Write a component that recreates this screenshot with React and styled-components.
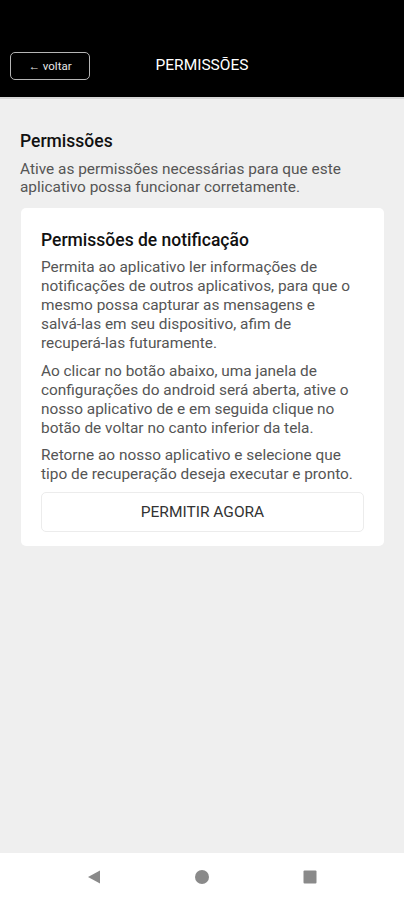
import styled, { createGlobalStyle } from "styled-components"

const Global = createGlobalStyle`
  html, body {
    margin: 0;
    padding: 0;
  }
  body {
    font-family: Roboto, "Noto Sans", sans-serif;
    background: #efefef;
  }
`

const Screen = styled.div`
  width: 404px;
  height: 900px;
  display: flex;
  flex-direction: column;
  background: #efefef;
`

const Header = styled.header`
  height: 99px;
  background: #000;
  border-bottom: 2px solid #d6d6d6;
  display: flex;
  align-items: flex-end;
  padding: 0 10px 17px;
  box-sizing: border-box;
  position: relative;
`

const BackButton = styled.button`
  width: 80px;
  height: 28px;
  background: transparent;
  border: 1.5px solid #b5b5b5;
  border-radius: 5px;
  color: #e8e8e8;
  font-family: Roboto, sans-serif;
  font-size: 11.5px;
  padding: 0;
`

const Title = styled.h1`
  position: absolute;
  left: 0;
  right: 0;
  bottom: 23px;
  margin: 0;
  text-align: center;
  color: #fff;
  font-size: 15.5px;
  line-height: 18px;
  font-weight: 400;
  pointer-events: none;
`

const Content = styled.main`
  flex: 1;
  padding: 31px 20px 0 20px;
`

const PageTitle = styled.h2`
  margin: 0 0 8px;
  font-size: 17.5px;
  font-weight: 500;
  color: #111;
  line-height: 22px;
`

const Lead = styled.p`
  margin: 0 0 12px;
  font-size: 15.4px;
  line-height: 18px;
  color: #555;
`

const Card = styled.section`
  background: #fff;
  border-radius: 5px;
  margin-left: 1px;
  padding: 21px 20px 14px;
`

const CardTitle = styled.h3`
  margin: 0 0 7px;
  font-size: 17.5px;
  font-weight: 500;
  color: #111;
  line-height: 22px;
`

const Paragraph = styled.p`
  margin: 0 0 ${(props) => props.gap || 9}px;
  font-size: 15.4px;
  line-height: 19px;
  color: #555;
`

const NoBreak = styled.span`
  white-space: nowrap;
`

const ActionButton = styled.button`
  width: 100%;
  height: 40px;
  background: #fff;
  border: 1px solid #ececec;
  border-radius: 5px;
  color: #333;
  font-family: Roboto, sans-serif;
  font-size: 15.5px;
`

const NavBar = styled.nav`
  height: 47px;
  background: #fff;
  display: flex;
  justify-content: center;
  align-items: center;
  gap: 92px;
`

const NavIcon = styled.svg`
  width: 16px;
  height: 16px;
  fill: #8a8a8a;
`

function App() {
  return (
    <>
      <Global />
      <Screen>
        <Header>
          <BackButton>← voltar</BackButton>
          <Title>PERMISSÕES</Title>
        </Header>
        <Content>
          <PageTitle>Permissões</PageTitle>
          <Lead>
            Ative as permissões necessárias para que este aplicativo possa funcionar corretamente.
          </Lead>
          <Card>
            <CardTitle>Permissões de notificação</CardTitle>
            <Paragraph>
              Permita ao aplicativo ler informações de notificações de outros aplicativos, para que o
              mesmo possa capturar as mensagens e <NoBreak>salvá-las</NoBreak> em seu dispositivo,
              afim de <NoBreak>recuperá-las</NoBreak> futuramente.
            </Paragraph>
            <Paragraph gap={8}>
              Ao clicar no botão abaixo, uma janela de configurações do android será aberta, ative o
              nosso aplicativo de e em seguida clique no botão de voltar no canto inferior da tela.
            </Paragraph>
            <Paragraph gap={8}>
              Retorne ao nosso aplicativo e selecione que tipo de recuperação deseja executar e pronto.
            </Paragraph>
            <ActionButton>PERMITIR AGORA</ActionButton>
          </Card>
        </Content>
        <NavBar>
          <NavIcon viewBox="0 0 16 16">
            <path d="M2 8 L14 1.5 L14 14.5 Z" />
          </NavIcon>
          <NavIcon viewBox="0 0 16 16">
            <circle cx="8" cy="8" r="7" />
          </NavIcon>
          <NavIcon viewBox="0 0 16 16">
            <rect x="1.5" y="1.5" width="13" height="13" rx="1" />
          </NavIcon>
        </NavBar>
      </Screen>
    </>
  )
}

export default App
